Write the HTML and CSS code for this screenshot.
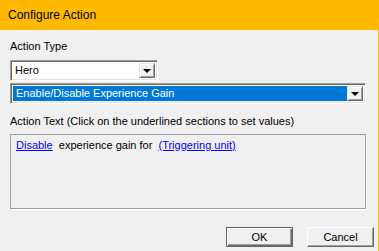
FILE: index.html
```html
<!DOCTYPE html>
<html lang="en">
<head>
  <meta charset="UTF-8" />
  <title>Configure Action</title>
  <link rel="stylesheet" href="styles.css">
</head>
<body>

<div class="dialog">
  <div class="titlebar">Configure Action</div>

  <div class="content">
    <div class="label first">Action Type</div>

    <div class="combo short">
      <div class="combo-value">Hero</div>
      <div class="combo-btn"><span class="arrow"></span></div>
    </div>

    <div class="combo wide">
      <div class="combo-value selected">Enable/Disable Experience Gain</div>
      <div class="combo-btn"><span class="arrow"></span></div>
    </div>

    <div class="label second">Action Text (Click on the underlined sections to set values)</div>

    <div class="action-text">
      <a href="#" class="param">Disable</a>&nbsp; experience gain for &nbsp;<a href="#" class="param">(Triggering unit)</a>
    </div>
  </div>

  <div class="buttons">
    <button class="btn default">OK</button>
    <button class="btn">Cancel</button>
  </div>
</div>

</body>
</html>
```

FILE: styles.css
```css
body {
  margin: 0;
  background: #f0f0f0;
  font-family: "Liberation Sans", Arial, sans-serif;
  font-size: 11px;
  color: #000;
}
.dialog {
  width: 378px;
  height: 251px;
  border-right: 1px solid #ffb900;
  background: #f0f0f0;
}
.titlebar {
  height: 30px;
  line-height: 30px;
  background: #ffb900;
  padding-left: 8px;
  font-size: 12px;
  color: #000;
}
.content {
  padding: 0 12px 0 10px;
}
.label {
  line-height: 13px;
  height: 13px;
  white-space: nowrap;
}
.label.first { margin-top: 10px; margin-bottom: 7px; }
.label.second { margin-top: 11px; margin-bottom: 6px; }

.combo {
  display: flex;
  height: 21px;
  box-sizing: border-box;
  background: #fff;
  border-top: 1px solid #a0a0a0;
  border-left: 1px solid #a0a0a0;
  border-bottom: 1px solid #fff;
  border-right: 1px solid #fff;
  box-shadow: inset 1px 1px 0 #696969, inset -1px -1px 0 #e3e3e3;
  padding: 2px;
}
.combo.short { width: 148px; }
.combo.wide { width: 356px; margin-top: 2px; }
.combo-value {
  flex: 1;
  line-height: 15px;
  padding-left: 2px;
  white-space: nowrap;
  overflow: hidden;
}
.combo-value.selected {
  background: #0078d7;
  color: #fff;
  padding-left: 3px;
}
.combo-btn {
  width: 16px;
  box-sizing: border-box;
  background: #f0f0f0;
  border-top: 1px solid #e3e3e3;
  border-left: 1px solid #e3e3e3;
  border-bottom: 1px solid #696969;
  border-right: 1px solid #696969;
  box-shadow: inset 1px 1px 0 #fff, inset -1px -1px 0 #a0a0a0;
  display: flex;
  align-items: center;
  justify-content: center;
}
.arrow {
  width: 0;
  height: 0;
  border-left: 4px solid transparent;
  border-right: 4px solid transparent;
  border-top: 4px solid #000;
  margin-top: 1px;
}

.action-text {
  height: 75px;
  width: 356px;
  box-sizing: border-box;
  border: 1px solid #a0a0a0;
  box-shadow: 1px 1px 0 #fff;
  padding: 4px 5px;
  line-height: 13px;
  white-space: nowrap;
}
.param {
  color: #0000ff;
  text-decoration: underline;
}

.buttons {
  display: flex;
  justify-content: flex-end;
  gap: 14px;
  padding-right: 4px;
  margin-top: 18px;
}
.btn {
  width: 67px;
  height: 20px;
  box-sizing: border-box;
  font-family: "Liberation Sans", Arial, sans-serif;
  font-size: 11px;
  color: #000;
  background: #f0f0f0;
  padding: 0;
  border-top: 1px solid #fff;
  border-left: 1px solid #fff;
  border-bottom: 1px solid #696969;
  border-right: 1px solid #696969;
  box-shadow: inset -1px -1px 0 #a0a0a0;
}
.btn.default {
  border: 1px solid #646464;
  box-shadow: inset 1px 1px 0 #fff, inset -1px -1px 0 #696969, inset -2px -2px 0 #a0a0a0;
}
```
